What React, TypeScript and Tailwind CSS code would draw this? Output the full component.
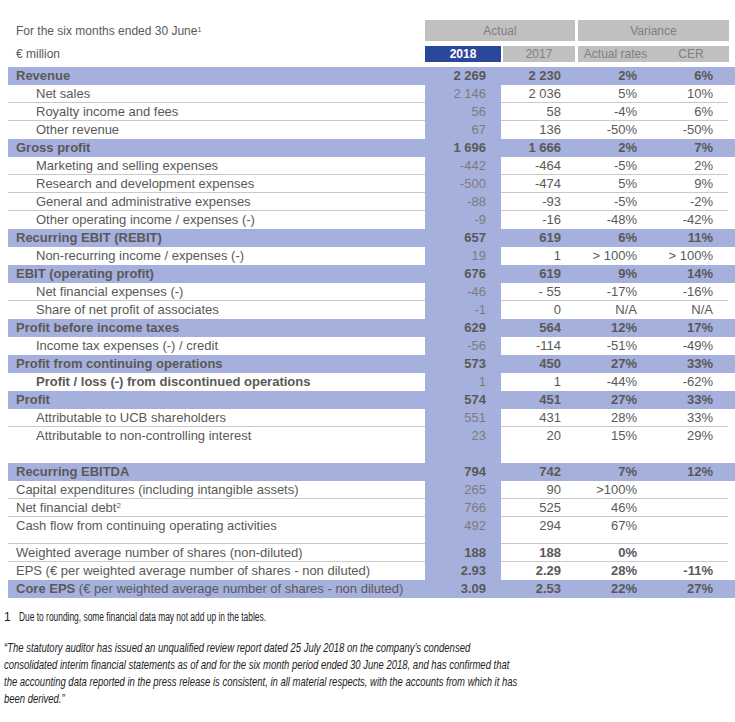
import type { ReactNode } from "react";

type Kind = "band" | "item" | "plain";

interface Row {
  label: ReactNode;
  v?: string[];
  kind?: Kind;
  line?: boolean;
  boldLabel?: boolean;
  boldValues?: boolean;
  gap?: number;
}

const ROWS: Row[] = [
  { label: "Revenue", v: ["2 269", "2 230", "2%", "6%"], kind: "band" },
  { label: "Net sales", v: ["2 146", "2 036", "5%", "10%"], kind: "item", line: true },
  { label: "Royalty income and fees", v: ["56", "58", "-4%", "6%"], kind: "item", line: true },
  { label: "Other revenue", v: ["67", "136", "-50%", "-50%"], kind: "item" },
  { label: "Gross profit", v: ["1 696", "1 666", "2%", "7%"], kind: "band" },
  { label: "Marketing and selling expenses", v: ["-442", "-464", "-5%", "2%"], kind: "item", line: true },
  { label: "Research and development expenses", v: ["-500", "-474", "5%", "9%"], kind: "item", line: true },
  { label: "General and administrative expenses", v: ["-88", "-93", "-5%", "-2%"], kind: "item", line: true },
  { label: "Other operating income / expenses (-)", v: ["-9", "-16", "-48%", "-42%"], kind: "item" },
  { label: "Recurring EBIT (REBIT)", v: ["657", "619", "6%", "11%"], kind: "band" },
  { label: "Non-recurring income / expenses (-)", v: ["19", "1", "> 100%", "> 100%"], kind: "item" },
  { label: "EBIT (operating profit)", v: ["676", "619", "9%", "14%"], kind: "band" },
  { label: "Net financial expenses (-)", v: ["-46", "- 55", "-17%", "-16%"], kind: "item", line: true },
  { label: "Share of net profit of associates", v: ["-1", "0", "N/A", "N/A"], kind: "item" },
  { label: "Profit before income taxes", v: ["629", "564", "12%", "17%"], kind: "band" },
  { label: "Income tax expenses (-) / credit", v: ["-56", "-114", "-51%", "-49%"], kind: "item" },
  { label: "Profit from continuing operations", v: ["573", "450", "27%", "33%"], kind: "band" },
  { label: "Profit / loss (-) from discontinued operations", v: ["1", "1", "-44%", "-62%"], kind: "item", boldLabel: true },
  { label: "Profit", v: ["574", "451", "27%", "33%"], kind: "band" },
  { label: "Attributable to UCB shareholders", v: ["551", "431", "28%", "33%"], kind: "item", line: true },
  { label: "Attributable to non-controlling interest", v: ["23", "20", "15%", "29%"], kind: "item" },
  { label: "", gap: 18 },
  { label: "Recurring EBITDA", v: ["794", "742", "7%", "12%"], kind: "band" },
  { label: "Capital expenditures (including intangible assets)", v: ["265", "90", ">100%", ""], kind: "plain", line: true },
  {
    label: (
      <span>
        Net financial debt<sup className="text-[8px]">2</sup>
      </span>
    ),
    v: ["766", "525", "46%", ""],
    kind: "plain",
    line: true,
  },
  { label: "Cash flow from continuing operating activities", v: ["492", "294", "67%", ""], kind: "plain" },
  { label: "", gap: 9, line: true },
  { label: "Weighted average number of shares (non-diluted)", v: ["188", "188", "0%", ""], kind: "plain", boldValues: true, line: true },
  { label: "EPS (€ per weighted average number of shares - non diluted)", v: ["2.93", "2.29", "28%", "-11%"], kind: "plain", boldValues: true },
  {
    label: (
      <span>
        <span className="font-bold">Core EPS</span> (€ per weighted average number of shares - non diluted)
      </span>
    ),
    v: ["3.09", "2.53", "22%", "27%"],
    kind: "band",
    boldValues: true,
  },
];

function TableRow({ row }: { row: Row }) {
  const band = row.kind === "band";
  const line = row.line ? "border-b border-[#c9c9c9]" : "";
  const h = row.gap === 9 ? "h-[9px]" : "h-[18px]";
  const boldVals = band || row.boldValues;
  const vals = row.v ?? ["", "", "", ""];

  return (
    <div className={`flex ${h} ${band ? "bg-[#a6b0dc]" : ""}`}>
      <div
        className={`box-border flex w-[417px] items-center ${line} ${
          row.kind === "item" ? "pl-[28px]" : "pl-[8px]"
        } ${band && typeof row.label === "string" ? "font-bold" : ""} ${row.boldLabel ? "font-bold" : ""}`}
      >
        {row.label}
      </div>
      <div
        className={`box-border flex w-[76px] items-center justify-end pr-[15px] bg-[#a6b0dc] ${
          boldVals ? "font-bold text-[#595959]" : "text-[#7c7c7c]"
        }`}
      >
        {vals[0]}
      </div>
      <div className={`box-border flex w-[75px] items-center justify-end pr-[15px] ${line} ${boldVals ? "font-bold" : ""}`}>
        {vals[1]}
      </div>
      <div className={`box-border flex w-[77px] items-center justify-end pr-[16px] ${line} ${boldVals ? "font-bold" : ""}`}>
        {vals[2]}
      </div>
      <div className={`box-border flex w-[75px] items-center justify-end pr-[15px] ${line} ${boldVals ? "font-bold" : ""}`}>
        {vals[3]}
      </div>
    </div>
  );
}

export default function App() {
  return (
    <div className="min-h-[722px] w-[735px] overflow-hidden bg-white font-['Liberation_Sans',Arial,sans-serif] text-[#595959]">
      <div className="pl-[8px] pt-[20px]">
        {/* header */}
        <div className="flex h-[21px] text-[12px]">
          <div className="flex w-[417px] items-end pb-[1px] pl-[8px]">
            <span>
              For the six months ended 30 June<sup className="text-[7px]">1</sup>
            </span>
          </div>
          <div className="flex w-[150px] items-center justify-center bg-[#c0c0c0] text-[#7f7f7f]">Actual</div>
          <div className="ml-[3px] flex w-[151px] items-center justify-center bg-[#c0c0c0] text-[#7f7f7f]">Variance</div>
        </div>
        <div className="mt-[5px] flex h-[16px] text-[12px]">
          <div className="flex w-[417px] items-center pl-[8px]">€ million</div>
          <div className="flex w-[76px] items-center justify-center bg-[#2b479b] font-bold text-white">2018</div>
          <div className="ml-[2px] flex w-[72px] items-center justify-center bg-[#c0c0c0] text-[#7f7f7f]">2017</div>
          <div className="ml-[3px] flex w-[151px] bg-[#c0c0c0] text-[#7f7f7f]">
            <div className="flex w-[75px] items-center justify-center">Actual rates</div>
            <div className="flex w-[76px] items-center justify-center">CER</div>
          </div>
        </div>

        {/* body */}
        <div className="mt-[5px] text-[13px]">
          {ROWS.map((row, i) => (
            <TableRow key={i} row={row} />
          ))}
        </div>
      </div>

      {/* footnotes */}
      <div className="mt-[12px] pl-[4px] text-[#222222]">
        <div className="flex h-[14px] items-center text-[12px]">
          <span className="w-[15px]">1</span>
          <span className="origin-left scale-x-[0.7] whitespace-nowrap">
            Due to rounding, some financial data may not add up in the tables.
          </span>
        </div>
        <div className="mt-[15px] text-[13px] italic leading-[17px]">
          <div className="origin-left scale-x-[0.73] whitespace-nowrap">
            “The statutory auditor has issued an unqualified review report dated 25 July 2018 on the company’s condensed
          </div>
          <div className="origin-left scale-x-[0.73] whitespace-nowrap">
            consolidated interim financial statements as of and for the six month period ended 30 June 2018, and has confirmed that
          </div>
          <div className="origin-left scale-x-[0.73] whitespace-nowrap">
            the accounting data reported in the press release is consistent, in all material respects, with the accounts from which it has
          </div>
          <div className="origin-left scale-x-[0.73] whitespace-nowrap">been derived.”</div>
        </div>
      </div>
    </div>
  );
}
